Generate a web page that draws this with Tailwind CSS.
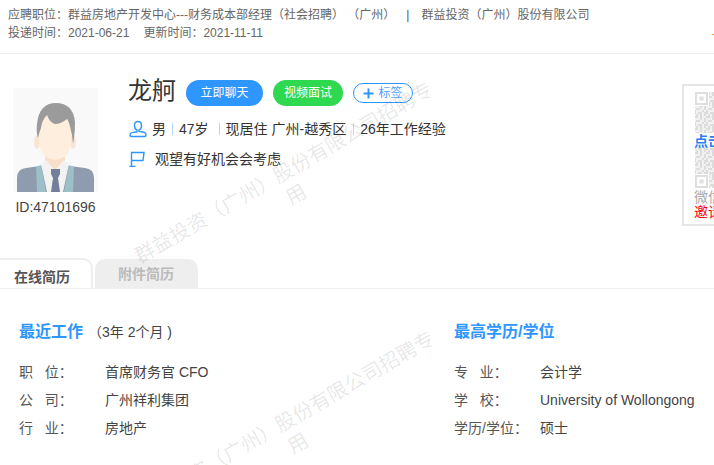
<!doctype html>
<html lang="en">
<head>
    <meta charset="UTF-8">
    <title>简历详情</title>
    <script src="https://cdn.jsdelivr.net/npm/@tailwindcss/browser@4"></script>
</head>

<body class="bg-white text-[#333] font-['Liberation_Sans','Noto_Sans_CJK_SC',sans-serif]">
    <div class="relative w-[714px] h-[465px] overflow-hidden">
        <!-- top info -->
        <div class="h-[54px] pl-2 pt-[6px] border-b border-[#eee] text-xs leading-[18px] text-[#666] whitespace-nowrap">
            <div class="flex">
                <span class="whitespace-pre">应聘职位：群益房地产开发中心---财务成本部经理（社会招聘） （广州）</span>
                <span class="ml-[11px] text-[#555]">|</span>
                <span class="ml-[12px]">群益投资（广州）股份有限公司</span>
            </div>
            <div class="flex gap-[14px]">
                <span>投递时间：2021-06-21</span>
                <span>更新时间：2021-11-11</span>
            </div>
        </div>

        <!-- profile -->
        <div class="relative h-[205px] flex">
            <div class="w-[128px] pl-[13px] pt-[34px] shrink-0">
                <svg class="w-[85px] h-[104px] bg-[#f9f9f9]" viewBox="0 0 85 104">
                    <path d="M4 104V90q0-9 9-10l14-2h30l15 2q9 1 9 10v14z" fill="#8f9bae"/>
                    <path d="M23 79l5-2 5 27h-9zM61 79l-5-2-5 27h9z" fill="#9dbfc8"/>
                    <path d="M32 66h20v8q0 6-10 8q-10-2-10-8z" fill="#f8e0c8"/>
                    <path d="M28 76l5-4 9 10-2 22h-6zM56 76l-5-4-9 10 2 22h6z" fill="#f2f2f2"/>
                    <path d="M38 81h9v5l-2 4 2 14h-9l2-14-2-4z" fill="#717f99"/>
                    <ellipse cx="24" cy="54" rx="3" ry="7" fill="#f8e6d4"/>
                    <ellipse cx="60" cy="54" rx="3" ry="7" fill="#f8e6d4"/>
                    <path d="M26 40q0-14 16-14t16 14v12q0 18-16 20q-16-2-16-20z" fill="#fdeedd"/>
                    <path d="M25 50q-2-6-1-14q2-21 19-21t19 19q0 9-1 16l-1 6q-1-10-2-13q-2-10-4-12q-6 5-12 5q-5-1-8-9q-5 5-6 13q-2 5-3 10z" fill="#9b9b9b"/>
                </svg>
                <div class="mt-[5px] w-[85px] text-center text-sm leading-5 text-[#444] whitespace-nowrap">ID:47101696</div>
            </div>

            <div class="pt-[26px]">
                <div class="flex items-start h-[26px]">
                    <span class="text-2xl leading-[24px] text-[#333] mt-[-1px] w-[48px]">龙舸</span>
                    <button class="ml-[10px] w-[77px] h-[26px] rounded-[13px] bg-[#2d96ff] text-white text-xs">立即聊天</button>
                    <button class="ml-[10px] w-[70px] h-[26px] rounded-[13px] bg-[#2ed84f] text-white text-xs">视频面试</button>
                    <button class="ml-[10px] mt-[3px] w-[60px] h-[20px] rounded-[10px] border border-[#2d96ff] text-[#4d9fff] text-xs leading-[18px] flex items-center justify-center gap-[4px]">
                        <svg class="w-[11px] h-[11px]" viewBox="0 0 11 11"><path d="M5.500 0.500v10M0.500 5.500h10" stroke="#2d96ff" stroke-width="2"/></svg>
                        标签
                    </button>
                </div>
                <div class="flex items-center h-5 mt-[13px] text-sm text-[#333] whitespace-nowrap">
                    <svg class="w-[18px] h-[18px] ml-px mr-[5px]" viewBox="0 0 18 18" fill="none" stroke="#2d96ff" stroke-width="1.400">
                        <path d="M9 1.500c2.500 0 3.500 2 3.500 4s-1 4-2.500 4.500v1.500l5 .8c1.500.3 2 1.200 2 2.200v.5c0 1-.7 1.500-1.500 1.500h-13c-.8 0-1.500-.5-1.500-1.500V14.800c0-1 .5-1.900 2-2.200l5-.8V10C6.500 9.500 5.500 7.500 5.500 5.500s1-4 3.500-4z"/>
                    </svg>
                    <span>男</span>
                    <span class="mx-[6px] w-px h-3 bg-[#b5d6f5]"></span>
                    <span>47岁</span>
                    <span class="ml-[10px] mr-[6px] w-px h-3 bg-[#c9cfe0]"></span>
                    <span>现居住 广州-越秀区</span>
                    <span class="ml-[7px] mr-[6px] w-px h-3 bg-[#b5d6f5]"></span>
                    <span>26年工作经验</span>
                </div>
                <div class="flex items-center h-5 mt-[10px] text-sm text-[#333]">
                    <svg class="w-4 h-4 ml-px mr-[10px]" viewBox="0 0 16 16" fill="none" stroke="#2d96ff" stroke-width="1.400">
                        <path d="M2.500 15.500V1.500h12.500l-1 8h-11.500M0.500 15.500h6"/>
                    </svg>
                    <span>观望有好机会会考虑</span>
                </div>
            </div>

            <!-- qr code card -->
            <div class="absolute left-[682px] top-[30px] w-[60px] h-[142px] border-2 border-[#e6e6e6] pl-[10px] pt-[6px] text-sm leading-[15px] whitespace-nowrap">
                <svg class="w-[60px] h-[96px]" viewBox="0 0 60 96">
                    <defs>
                        <pattern id="qr" width="12" height="12" patternUnits="userSpaceOnUse">
                            <rect width="12" height="12" fill="#f1f1f1"/>
                            <path d="M0 0h4v2H0zM6 0h2v4H6zM10 2h2v4h-2zM2 4h4v2H2zM0 6h2v4H0zM4 8h4v2H4zM8 6h2v2H8zM10 8h2v4h-2zM2 10h2v2H2zM6 10h2v2H6z" fill="#dcdcdc"/>
                        </pattern>
                    </defs>
                    <rect x="1" width="59" height="96" fill="url(#qr)"/>
                    <rect width="15" height="14" fill="#fff"/>
                    <rect x="2" y="1" width="11" height="11" fill="none" stroke="#dedede" stroke-width="2"/>
                    <rect x="5.500" y="4.500" width="4" height="4" fill="#dedede"/>
                    <rect y="82" width="15" height="14" fill="#fff"/>
                    <rect x="2" y="84" width="11" height="11" fill="none" stroke="#dedede" stroke-width="2"/>
                    <rect x="5.500" y="87.500" width="4" height="4" fill="#dedede"/>
                    <rect y="41" width="60" height="14" fill="#fff"/>
                </svg>
                <div class="absolute left-[10px] top-[45px] font-bold text-[#2d7ff0] text-sm">点击</div>
                <div class="text-[#aaa] mt-[2px]">微信</div>
                <div class="text-[#f00]">邀请</div>
            </div>
            <span class="absolute left-[712px] top-[-20px] w-[2px] h-px bg-[#e8a33d]"></span>
        </div>

        <!-- tabs -->
        <div class="flex items-end h-[30px] border-b border-[#eee]">
            <div class="w-[93px] h-[30px] pl-[14px] pt-[7px] text-sm leading-[20px] font-bold text-[#555] bg-white border-t-2 border-r-2 border-[#eee] rounded-tr-[10px]">在线简历</div>
            <div class="w-[103px] h-[29px] ml-[2px] pl-[23px] pt-[5px] text-sm leading-[20px] font-bold text-[#bbb] bg-[#eee] rounded-t-[10px]">附件简历</div>
        </div>

        <!-- summary -->
        <div class="flex pl-[19px] pt-[31px]">
            <div class="w-[435px]">
                <div class="flex items-center h-6">
                    <h3 class="text-base font-bold text-[#2d96ff]">最近工作</h3>
                    <span class="ml-[5px] text-sm text-[#444]">（3年 2个月 )</span>
                </div>
                <dl class="mt-[14px] text-sm leading-7">
                    <div class="flex"><dt class="w-[86px] text-[#555] whitespace-pre">职   位：</dt><dd class="text-[#444]">首席财务官 CFO</dd></div>
                    <div class="flex"><dt class="w-[86px] text-[#555] whitespace-pre">公   司：</dt><dd class="text-[#444]">广州祥利集团</dd></div>
                    <div class="flex"><dt class="w-[86px] text-[#555] whitespace-pre">行   业：</dt><dd class="text-[#444]">房地产</dd></div>
                </dl>
            </div>
            <div>
                <div class="flex items-center h-6">
                    <h3 class="text-base font-bold text-[#2d96ff]">最高学历/学位</h3>
                </div>
                <dl class="mt-[14px] text-sm leading-7">
                    <div class="flex"><dt class="w-[86px] text-[#555] whitespace-pre">专   业：</dt><dd class="text-[#444]">会计学</dd></div>
                    <div class="flex"><dt class="w-[86px] text-[#555] whitespace-pre">学   校：</dt><dd class="text-[#444]">University of Wollongong</dd></div>
                    <div class="flex"><dt class="w-[86px] text-[#555] whitespace-pre">学历/学位：</dt><dd class="text-[#444]">硕士</dd></div>
                </dl>
            </div>
        </div>

        <!-- watermarks -->
        <div class="absolute left-[120px] top-[159px] w-[340px] text-center text-xl leading-[25px] text-black/10 -rotate-30 pointer-events-none">群益投资（广州）股份有限公司招聘专用</div>
        <div class="absolute left-[122px] top-[408px] w-[340px] text-center text-xl leading-[25px] text-black/10 -rotate-30 pointer-events-none">群益投资（广州）股份有限公司招聘专用</div>
    </div>
</body>
</html>
